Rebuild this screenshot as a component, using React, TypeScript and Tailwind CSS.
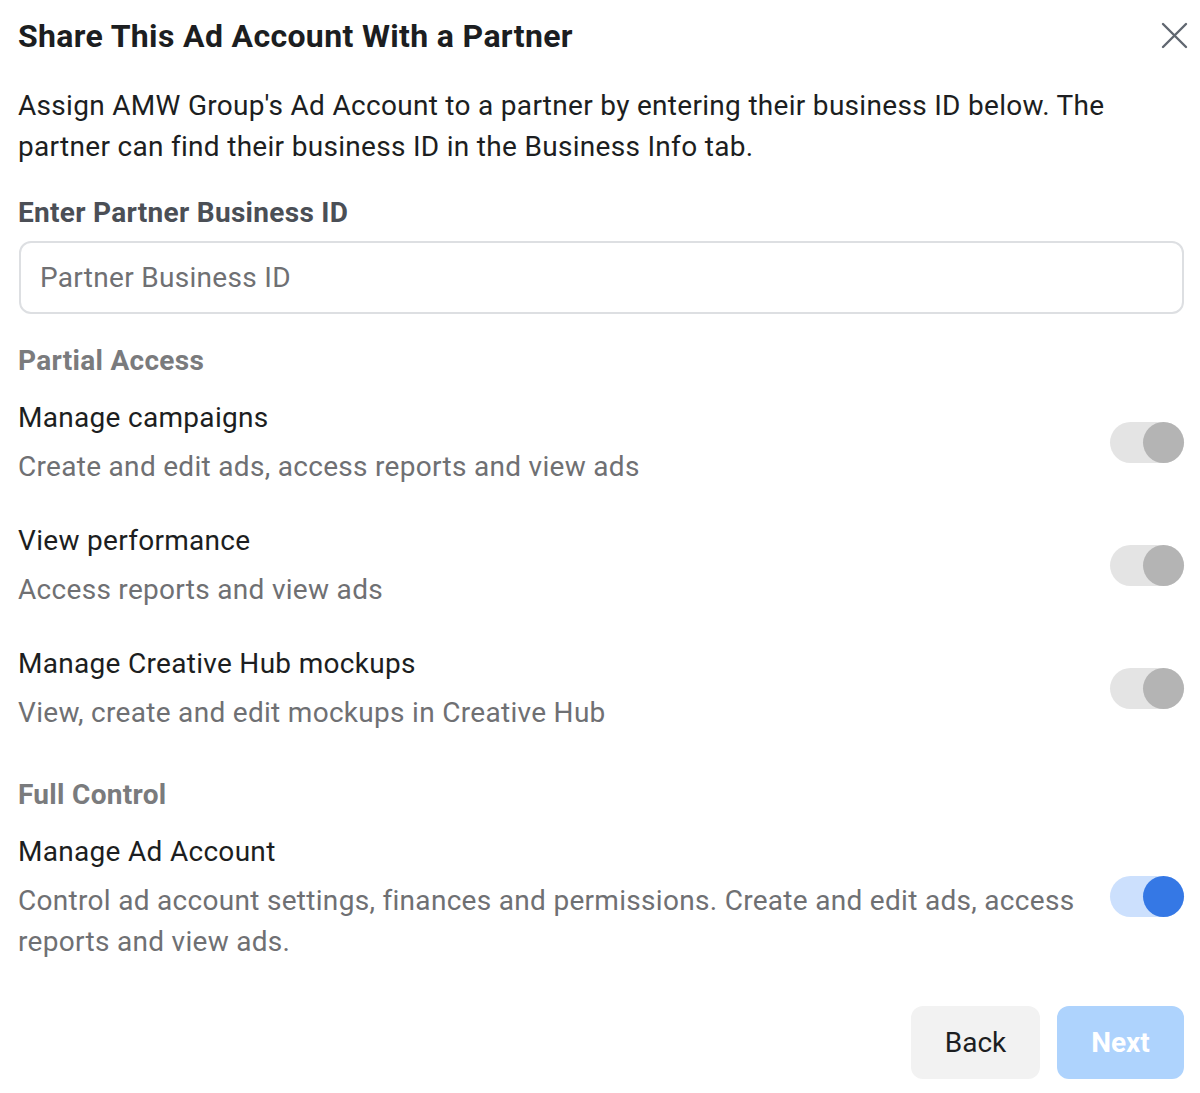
import React, { useState } from 'react';

const PARTIAL = [
  { title: 'Manage campaigns', desc: 'Create and edit ads, access reports and view ads' },
  { title: 'View performance', desc: 'Access reports and view ads' },
  { title: 'Manage Creative Hub mockups', desc: 'View, create and edit mockups in Creative Hub' },
];

function Toggle({ on }: { on: boolean }) {
  return (
    <div
      className={`relative w-[74px] h-[41px] rounded-full shrink-0 ${on ? 'bg-[#cce0fd]' : 'bg-[#e4e4e4]'}`}
    >
      <div
        className={`absolute right-0 top-0 w-[41px] h-[41px] rounded-full ${on ? 'bg-[#3578e5]' : 'bg-[#b4b4b4]'}`}
      />
    </div>
  );
}

function PermissionRow({ title, desc, on }: { title: string; desc: React.ReactNode; on: boolean }) {
  return (
    <div className="flex items-center justify-between gap-[12px]">
      <div className="flex-1 min-w-0">
        <p className="text-[28px] leading-[41px] tracking-[0.3px] text-[#1c1e21]">{title}</p>
        <p className="text-[28px] leading-[41px] tracking-[0.3px] text-[#6f7073] mt-[8px]">{desc}</p>
      </div>
      <Toggle on={on} />
    </div>
  );
}

export default function App() {
  const [id, setId] = useState('');

  return (
    <div className="w-[1200px] h-[1093px] bg-white pl-[18px] pr-[16px] font-['Roboto',sans-serif]">
      {/* Header */}
      <div className="flex items-start justify-between pt-[16px]">
        <h1 className="text-[32px] leading-[40px] font-bold tracking-[0.35px] text-[#1c1e21]">
          Share This Ad Account With a Partner
        </h1>
        <button className="mt-[6px] mr-[-4px] text-[#606770]">
          <svg width="27" height="27" viewBox="0 0 27 27" fill="none" stroke="currentColor" strokeWidth="2.4" strokeLinecap="round">
            <path d="M2 2 L25 25 M25 2 L2 25" />
          </svg>
        </button>
      </div>

      <p className="mt-[29px] text-[28px] leading-[41px] tracking-[0.3px] text-[#1c1e21]">
        Assign AMW Group's Ad Account to a partner by entering their business ID below. The partner can find their
        business ID in the Business Info tab.
      </p>

      {/* Business ID */}
      <p className="mt-[25px] text-[28px] leading-[41px] font-bold tracking-[0.3px] text-[#4b4f56]">
        Enter Partner Business ID
      </p>
      <input
        value={id}
        onChange={(e) => setId(e.target.value)}
        placeholder="Partner Business ID"
        className="mt-[8px] ml-[1px] w-[1165px] h-[73px] px-[19px] rounded-[12px] border-2 border-[#dddfe2] text-[28px] tracking-[0.3px] text-[#1c1e21] placeholder:text-[#6f7073] outline-none"
      />

      {/* Partial access */}
      <p className="mt-[26px] text-[28px] leading-[41px] font-bold tracking-[0.3px] text-[#7a7b7d]">Partial Access</p>
      <div className="mt-[16px] flex flex-col gap-[33px]">
        {PARTIAL.map((p) => (
          <PermissionRow key={p.title} title={p.title} desc={p.desc} on={false} />
        ))}
      </div>

      {/* Full control */}
      <p className="mt-[41px] text-[28px] leading-[41px] font-bold tracking-[0.3px] text-[#7a7b7d]">Full Control</p>
      <div className="mt-[16px]">
        <PermissionRow
          title="Manage Ad Account"
          desc={
            <>
              Control ad account settings, finances and permissions. Create and edit ads, access
              <br />
              reports and view ads.
            </>
          }
          on={true}
        />
      </div>

      {/* Footer */}
      <div className="mt-[44px] flex justify-end gap-[17px]">
        <button className="w-[129px] h-[73px] rounded-[12px] bg-[#f2f2f2] text-[28px] text-[#1c1e21]">Back</button>
        <button className="w-[127px] h-[73px] rounded-[12px] bg-[#aed3fd] text-[28px] font-bold text-white">Next</button>
      </div>
    </div>
  );
}
